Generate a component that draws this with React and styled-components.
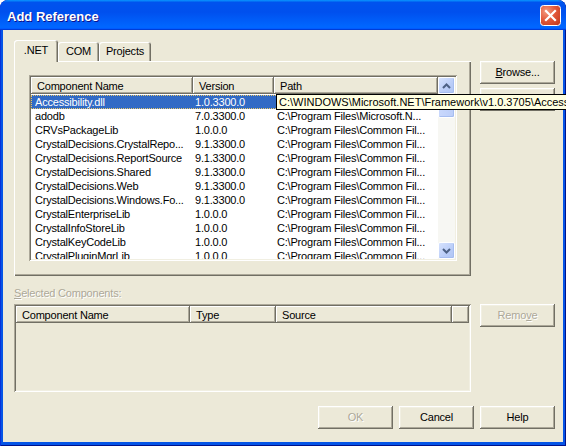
import React from 'react';
import styled, { createGlobalStyle, css } from 'styled-components';

const face = '#ECE9D8';
const light = '#F1EFE2';
const shadow = '#ACA899';
const dark = '#716F64';

const Global = createGlobalStyle`
  html, body { margin: 0; padding: 0; background: #ffffff; }
  body { font-family: "Liberation Sans", Arial, sans-serif; font-size: 11px; letter-spacing: -0.2px; color: #000; }
  * { box-sizing: border-box; }
`;

const raised = css`
  box-shadow: inset -1px -1px ${dark}, inset 1px 1px #fff, inset -2px -2px ${shadow}, inset 2px 2px ${light};
`;
const sunken = css`
  box-shadow: inset 1px 1px ${shadow}, inset -1px -1px #fff, inset 2px 2px ${dark}, inset -2px -2px ${light};
`;

const Window = styled.div`
  position: relative;
  width: 566px;
  height: 446px;
  overflow: hidden;
  display: flex;
  flex-direction: column;
  background: #0554E6;
  border-radius: 8px 8px 0 0;
  box-shadow: inset 1px 0 #0831D9, inset -1px 0 #00138C, inset 0 -1px #00138C;
`;

const TitleBar = styled.div`
  flex: none;
  height: 30px;
  display: flex;
  align-items: center;
  justify-content: space-between;
  padding: 2px 5px 0 7px;
  border-radius: 8px 8px 0 0;
  background: linear-gradient(180deg, #0997ff, #0053ee 8%, #0050ee 40%, #0066ff 88%, #0066ff 93%, #005bff 95%, #003dd7 96%, #003dd7);
`;

const Title = styled.span`
  font-family: "Liberation Sans", Arial, sans-serif;
  font-weight: bold;
  font-size: 13px;
  letter-spacing: 0;
  color: #fff;
  text-shadow: 1px 1px #0F1089;
`;

const CloseBtn = styled.div`
  width: 21px;
  height: 21px;
  display: flex;
  margin-top: -1px;
`;

const Client = styled.div`
  flex: 1;
  margin: 0 3px 4px 3px;
  background: ${face};
  padding: 10px 8px 0 11px;
  display: flex;
  flex-direction: column;
`;

const Section = styled.div`
  display: flex;
  gap: 9px;
  align-items: flex-start;
`;

const TabArea = styled.div`
  width: 457px;
  display: flex;
  flex-direction: column;
`;

const TabStrip = styled.div`
  display: flex;
  align-items: flex-end;
  height: 21px;
`;

const Tab = styled.div`
  position: relative;
  width: ${p => p.$w}px;
  height: ${p => (p.$active ? 22 : 19)}px;
  margin-bottom: ${p => (p.$active ? -1 : 0)}px;
  z-index: ${p => (p.$active ? 2 : 1)};
  display: flex;
  justify-content: center;
  padding-top: ${p => (p.$active ? 4 : 3)}px;
  background: ${face};
  border-radius: 3px 3px 0 0;
  box-shadow: inset 1px 1px #fff, inset -1px 0 ${dark}, inset -2px 0 ${shadow};
`;

const TabPanel = styled.div`
  position: relative;
  height: 215px;
  padding: 14px 14px 15px 15px;
  box-shadow: inset 1px 1px #fff, inset -1px -1px ${dark}, inset -2px -2px ${shadow};
`;

const ListBox = styled.div`
  height: ${p => p.$h}px;
  padding: 2px;
  background: ${p => (p.$disabled ? face : '#fff')};
  ${sunken};
  display: flex;
  overflow: hidden;
`;

const ListMain = styled.div`
  flex: 1;
  display: flex;
  flex-direction: column;
  overflow: hidden;
`;

const Header = styled.div`
  flex: none;
  display: grid;
  grid-template-columns: ${p => p.$cols};
  height: 17px;
`;

const HeadCell = styled.div`
  background: ${face};
  padding: 3px 0 0 6px;
  white-space: nowrap;
  overflow: hidden;
  box-shadow: inset -1px -1px ${dark}, inset 1px 1px #fff, inset -2px -2px ${shadow};
`;

const Rows = styled.div`
  padding-top: 1px;
  display: flex;
  flex-direction: column;
`;

const Row = styled.div`
  display: grid;
  grid-template-columns: ${p => p.$cols};
  height: 14px;
  line-height: 14px;
  flex: none;
  color: ${p => (p.$sel ? '#fff' : '#000')};
  background: ${p => (p.$sel ? '#316AC5' : 'transparent')};
  outline: ${p => (p.$sel ? '1px dotted #E8C76A' : 'none')};
  outline-offset: -1px;
`;

const Cell = styled.div`
  padding-left: ${p => p.$pad}px;
  white-space: nowrap;
  overflow: hidden;
`;

const ScrollBar = styled.div`
  flex: none;
  width: 17px;
  display: flex;
  flex-direction: column;
  background: #F7F7F3;
`;

const ScrollBtn = styled.div`
  flex: none;
  width: 17px;
  height: 17px;
  border-radius: 2px;
  border: 1px solid #fff;
  background: linear-gradient(135deg, #D6E2FD, #BACDF8 60%, #B0C5F4);
  box-shadow: inset -1px -1px #A6BDF0;
  display: flex;
  align-items: center;
  justify-content: center;
`;

const Thumb = styled.div`
  flex: none;
  margin-top: 1px;
  height: 23px;
  border-radius: 2px;
  border: 1px solid #fff;
  background: linear-gradient(90deg, #C9D8FC, #BCCEF9);
  box-shadow: inset -1px -1px #A6BDF0;
`;

const Track = styled.div`
  flex: 1;
`;

const SideCol = styled.div`
  width: 75px;
  display: flex;
  flex-direction: column;
  gap: 4px;
  padding-top: ${p => p.$top}px;
`;

const Button = styled.div`
  width: 75px;
  height: 23px;
  display: flex;
  align-items: center;
  justify-content: center;
  background: ${face};
  ${raised};
  color: ${p => (p.$disabled ? shadow : '#000')};
  text-shadow: ${p => (p.$disabled ? '1px 1px #fff' : 'none')};
  padding-bottom: 1px;
`;

const Label = styled.div`
  height: 13px;
  line-height: 13px;
  margin: 11px 0 4px 0;
  color: ${shadow};
  text-shadow: 1px 1px #fff;
`;

const Footer = styled.div`
  display: flex;
  justify-content: flex-end;
  gap: 6px;
  margin-top: 14px;
`;

const Tooltip = styled.div`
  position: absolute;
  left: 276px;
  top: 94px;
  height: 16px;
  line-height: 14px;
  padding: 0 2px 0 2px;
  border: 1px solid #000;
  background: #FFFFE1;
  color: #000;
  letter-spacing: 0;
  white-space: nowrap;
  z-index: 5;
`;

const U = styled.span`
  text-decoration: underline;
`;

const Chevron = ({ up }) => (
  <svg width="9" height="6" viewBox="0 0 9 6">
    <path d={up ? 'M1 5 L4.5 1.5 L8 5' : 'M1 1 L4.5 4.5 L8 1'} fill="none" stroke="#4D6185" strokeWidth="2" />
  </svg>
);

const rows = [
  ['Accessibility.dll', '1.0.3300.0', 'C:\\WINDOWS\\Microsoft.N...'],
  ['adodb', '7.0.3300.0', 'C:\\Program Files\\Microsoft.N...'],
  ['CRVsPackageLib', '1.0.0.0', 'C:\\Program Files\\Common Fil...'],
  ['CrystalDecisions.CrystalRepo...', '9.1.3300.0', 'C:\\Program Files\\Common Fil...'],
  ['CrystalDecisions.ReportSource', '9.1.3300.0', 'C:\\Program Files\\Common Fil...'],
  ['CrystalDecisions.Shared', '9.1.3300.0', 'C:\\Program Files\\Common Fil...'],
  ['CrystalDecisions.Web', '9.1.3300.0', 'C:\\Program Files\\Common Fil...'],
  ['CrystalDecisions.Windows.Fo...', '9.1.3300.0', 'C:\\Program Files\\Common Fil...'],
  ['CrystalEnterpriseLib', '1.0.0.0', 'C:\\Program Files\\Common Fil...'],
  ['CrystalInfoStoreLib', '1.0.0.0', 'C:\\Program Files\\Common Fil...'],
  ['CrystalKeyCodeLib', '1.0.0.0', 'C:\\Program Files\\Common Fil...'],
  ['CrystalPluginMgrLib', '1.0.0.0', 'C:\\Program Files\\Common Fil...'],
];

const cols1 = '162px 81px 1fr';
const cols2 = '174px 86px 176px 1fr';

export default function App() {
  return (
    <>
      <Global />
      <Window>
        <TitleBar>
          <Title>Add Reference</Title>
          <CloseBtn>
            <svg width="21" height="21" viewBox="0 0 21 21">
              <defs>
                <radialGradient id="cg" cx="0.3" cy="0.3" r="0.9">
                  <stop offset="0" stopColor="#F39A7E" />
                  <stop offset="0.5" stopColor="#E2583A" />
                  <stop offset="1" stopColor="#C43A1E" />
                </radialGradient>
              </defs>
              <rect x="0.5" y="0.5" width="20" height="20" rx="3" fill="url(#cg)" stroke="#fff" />
              <path d="M6 6 L15 15 M15 6 L6 15" stroke="#fff" strokeWidth="2.2" strokeLinecap="square" />
            </svg>
          </CloseBtn>
        </TitleBar>
        <Client>
          <Section>
            <TabArea>
              <TabStrip>
                <Tab $active $w={44}>.NET</Tab>
                <Tab $w={41}>COM</Tab>
                <Tab $w={52}>Projects</Tab>
              </TabStrip>
              <TabPanel>
                <ListBox $h={186}>
                  <ListMain>
                    <Header $cols={cols1}>
                      <HeadCell>Component Name</HeadCell>
                      <HeadCell>Version</HeadCell>
                      <HeadCell>Path</HeadCell>
                    </Header>
                    <Rows>
                      {rows.map((r, i) => (
                        <Row key={r[0]} $cols={cols1} $sel={i === 0}>
                          <Cell $pad={4}>{r[0]}</Cell>
                          <Cell $pad={2}>{r[1]}</Cell>
                          <Cell $pad={3}>{r[2]}</Cell>
                        </Row>
                      ))}
                    </Rows>
                  </ListMain>
                  <ScrollBar>
                    <ScrollBtn><Chevron up /></ScrollBtn>
                    <Thumb />
                    <Track />
                    <ScrollBtn><Chevron /></ScrollBtn>
                  </ScrollBar>
                </ListBox>
              </TabPanel>
            </TabArea>
            <SideCol $top={21}>
              <Button><span><U>B</U>rowse...</span></Button>
              <Button><span><U>S</U>elect</span></Button>
            </SideCol>
          </Section>
          <Label><U>S</U>elected Components:</Label>
          <Section>
            <TabArea>
              <ListBox $h={88} $disabled>
                <ListMain>
                  <Header $cols={cols2}>
                    <HeadCell>Component Name</HeadCell>
                    <HeadCell>Type</HeadCell>
                    <HeadCell>Source</HeadCell>
                    <HeadCell />
                  </Header>
                </ListMain>
              </ListBox>
            </TabArea>
            <SideCol $top={0}>
              <Button $disabled><span>Remo<U>v</U>e</span></Button>
            </SideCol>
          </Section>
          <Footer>
            <Button $disabled>OK</Button>
            <Button>Cancel</Button>
            <Button>Help</Button>
          </Footer>
        </Client>
        <Tooltip>C:\WINDOWS\Microsoft.NET\Framework\v1.0.3705\Accessibility.dll</Tooltip>
      </Window>
    </>
  );
}
